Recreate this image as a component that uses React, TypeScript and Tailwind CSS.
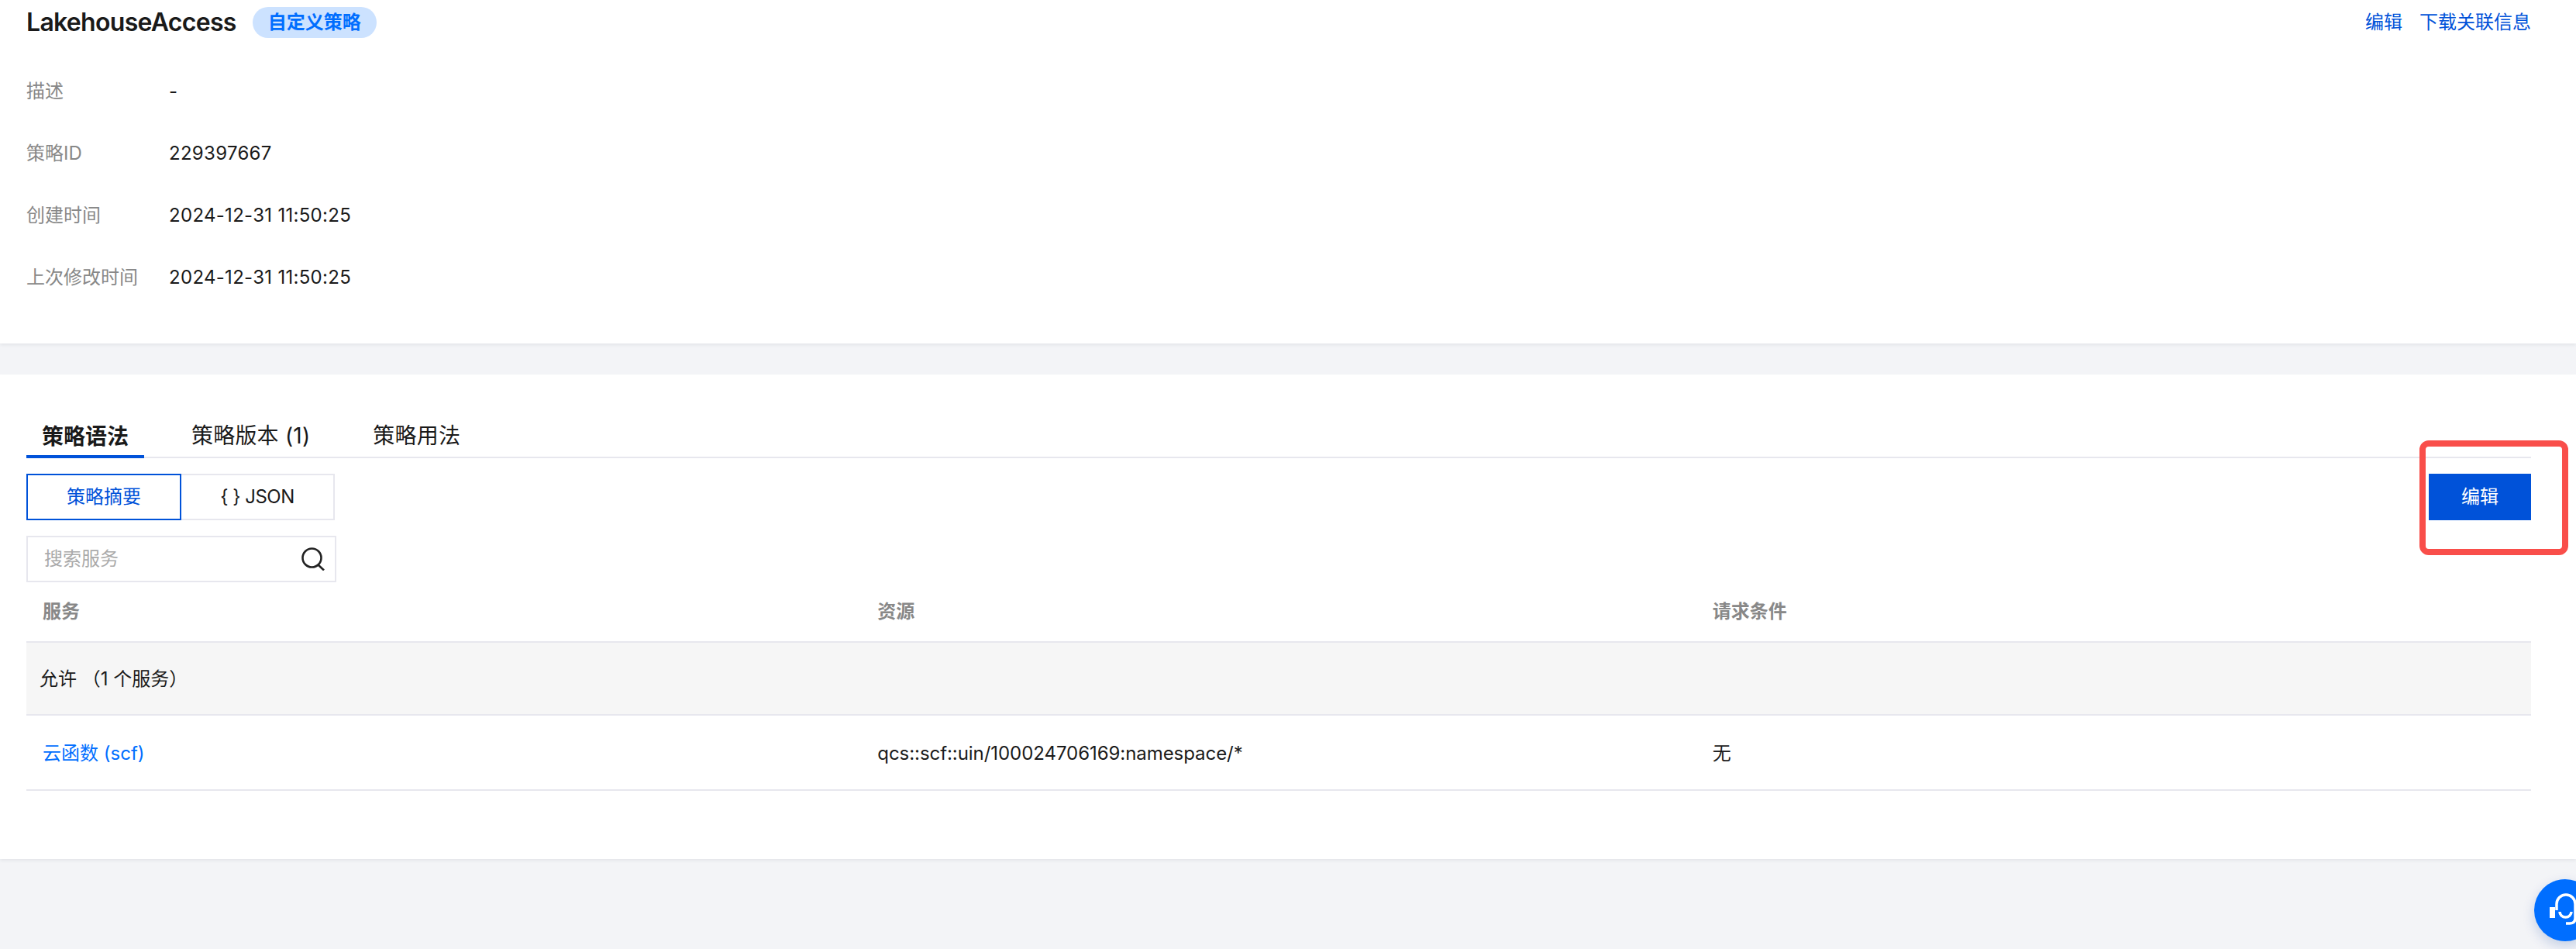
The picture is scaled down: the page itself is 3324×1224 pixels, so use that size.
import * as React from "react";

const infoRows = [
  { label: "描述", value: "-" },
  { label: "策略ID", value: "229397667" },
  { label: "创建时间", value: "2024-12-31 11:50:25" },
  { label: "上次修改时间", value: "2024-12-31 11:50:25" },
];

const tabs = ["策略语法", "策略版本 (1)", "策略用法"];

export default function App() {
  return (
    <div className="relative h-[1224px] w-[3324px] overflow-hidden bg-[#f3f4f7] font-['Inter','Noto_Sans_CJK_SC',sans-serif] text-[24px] text-[#1a1a1a]">
      {/* policy info */}
      <section className="h-[443px] bg-white pl-[34px] pr-[58px] shadow-[0_2px_4px_rgba(54,58,80,0.08)]">
        <div className="flex h-[58px] items-center">
          <h1 className="text-[32px] font-semibold tracking-[-0.7px]">LakehouseAccess</h1>
          <span className="ml-[21px] flex h-[40px] items-center rounded-[20px] bg-[#cce2ff] px-[20px] font-semibold text-[#006eff]">
            自定义策略
          </span>
          <div className="ml-auto flex gap-[22px] text-[#0052d9]">
            <a>编辑</a>
            <a>下载关联信息</a>
          </div>
        </div>
        <div className="mt-[20px]">
          {infoRows.map((row) => (
            <div key={row.label} className="flex h-[80px] items-center">
              <span className="w-[184px] text-[#888888]">{row.label}</span>
              <span className="tracking-[0.3px]">{row.value}</span>
            </div>
          ))}
        </div>
      </section>

      {/* policy syntax */}
      <section className="mt-[40px] h-[625px] bg-white pl-[34px] pr-[58px] pt-[60px] shadow-[0_2px_4px_rgba(54,58,80,0.08)]">
        <div className="flex h-[48px] gap-[41px] border-b-2 border-[#e7e7ee] text-[28px]">
          {tabs.map((tab, i) => (
            <div
              key={tab}
              className={
                i === 0
                  ? "-mb-[2px] flex h-[48px] items-center border-b-4 border-[#0052d9] px-[20px] pb-[4px] font-semibold"
                  : "flex h-[46px] items-center px-[20px] pb-[8px] tracking-[0.2px]"
              }
            >
              {tab}
            </div>
          ))}
        </div>

        <div className="mt-[20px] flex justify-between">
          <div className="flex">
            <button className="h-[60px] w-[200px] border-2 border-[#0052d9] text-[#0052d9]">策略摘要</button>
            <button className="h-[60px] w-[198px] border-2 border-l-0 border-[#e7e7ee] tracking-[-0.5px]">{"{ } JSON"}</button>
          </div>
          <button className="h-[60px] w-[132px] bg-[#0052d9] text-white">编辑</button>
        </div>

        <div className="mt-[20px] flex h-[60px] w-[400px] items-center border-2 border-[#e7e7ee] pl-[21px] pr-[13px]">
          <input
            placeholder="搜索服务"
            className="min-w-0 flex-1 bg-transparent outline-none placeholder:text-[#aaaaaa]"
          />
          <svg width="30" height="30" viewBox="0 0 30 30" fill="none" stroke="#222222" strokeWidth="2.6">
            <circle cx="13.5" cy="13.5" r="12" />
            <path d="M21.5 22.5 L29 29.5" />
          </svg>
        </div>

        <div className="grid h-[78px] grid-cols-3 items-center border-b-2 border-[#e7e7ee] font-semibold text-[#888888]">
          <span className="pl-[21px]">服务</span>
          <span className="pl-[21px]">资源</span>
          <span className="pl-[21px]">请求条件</span>
        </div>
        <div className="flex h-[94px] items-center border-b-2 border-[#e7e7ee] bg-[#f6f6f6] pl-[17px] pt-[2px]">
          允许 （1 个服务）
        </div>
        <div className="grid h-[97px] grid-cols-3 items-center border-b-2 border-[#e7e7ee] pt-[3px]">
          <a className="pl-[21px] text-[#006eff]">云函数 (scf)</a>
          <span className="pl-[21px] tracking-[-0.06px]">qcs::scf::uin/100024706169:namespace/*</span>
          <span className="pl-[21px]">无</span>
        </div>
      </section>

      {/* annotation around the edit button */}
      <div className="absolute left-[3122px] top-[568px] h-[148px] w-[192px] rounded-[12px] border-8 border-[#f94e4a]" />

      {/* floating support button */}
      <div className="absolute left-[3270px] top-[1134px] flex h-[80px] w-[80px] rounded-full bg-[#006eff] shadow-[0_6px_16px_rgba(0,60,160,0.2)]">
        <svg width="80" height="80" viewBox="0 0 80 80" fill="none" stroke="#ffffff" strokeWidth="3.5">
          <path d="M29 40 V32 A12 12 0 0 1 53 32 V50 Q53 57 46 57 H41" />
          <path d="M33 42 A7.5 7 0 0 0 48 42" />
          <rect x="20" y="36" width="7" height="14" fill="#ffffff" stroke="none" />
        </svg>
      </div>
    </div>
  );
}
